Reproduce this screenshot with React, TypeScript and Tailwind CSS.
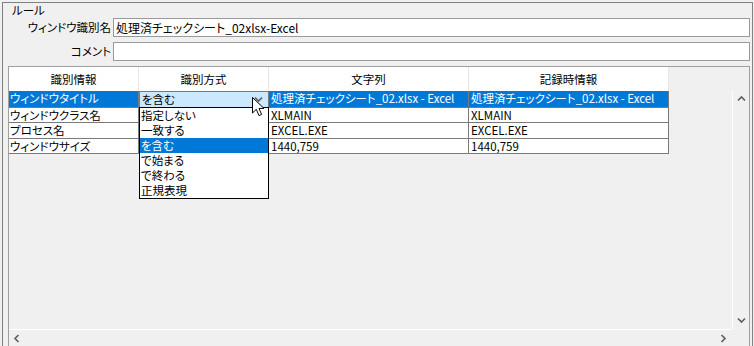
import React from "react";

function Chevron({ dir }: { dir: "up" | "down" | "left" | "right" }) {
  const pts = {
    up: "1,5.5 4.5,2 8,5.5",
    down: "1,2.5 4.5,6 8,2.5",
    left: "5.5,1 2,4.5 5.5,8",
    right: "2.5,1 6,4.5 2.5,8",
  }[dir];
  return (
    <svg width="9" height="9" viewBox="0 0 9 9">
      <polyline points={pts} fill="none" stroke="#606060" strokeWidth="1.7" />
    </svg>
  );
}

const rows = [
  { name: "ウィンドウタイトル", val: "処理済チェックシート_02.xlsx - Excel", h: "h-[17px]" },
  { name: "ウィンドウクラス名", val: "XLMAIN", h: "h-[15px]" },
  { name: "プロセス名", val: "EXCEL.EXE", h: "h-[16px]" },
  { name: "ウィンドウサイズ", val: "1440,759", h: "h-[15px]" },
];

const options = ["指定しない", "一致する", "を含む", "で始まる", "で終わる", "正規表現"];

export default function App() {
  return (
    <div className="w-[754px] h-[346px] overflow-hidden bg-[#f0f0f0] text-[11.5px] text-black font-['Noto_Sans_CJK_JP',sans-serif] [font-feature-settings:'palt'] pt-[2px] pl-[2px]">
      <div className="w-[751px] h-[400px] border-l border-t border-r border-[#808080] flex flex-col">
        <div className="h-[15px] leading-[15px] pl-[9px]">ルール</div>
        <div className="flex h-[19px] mr-[2px]">
          <div className="w-[108px] text-right leading-[19px] whitespace-nowrap">ウィンドウ識別名</div>
          <div className="ml-[2px] flex-1 border border-[#9a9a9a] bg-white pl-[2px] leading-[17px] whitespace-nowrap text-[12px]">
            処理済チェックシート_02xlsx-Excel
          </div>
        </div>
        <div className="flex h-[19px] mr-[2px] mt-[5px]">
          <div className="w-[108px] text-right leading-[19px] whitespace-nowrap">コメント</div>
          <div className="ml-[2px] flex-1 border border-[#9a9a9a] bg-white" />
        </div>
        <div className="ml-[5px] mr-[2px] mt-[5px] h-[300px] border border-[#a0a0a0]">
          <div className="grid grid-cols-[723px_17px] grid-rows-[262px_17px]">
            {/* content */}
            <div className="relative">
              <div className="flex h-[24px]">
                {[
                  ["識別情報", "w-[130px]"],
                  ["識別方式", "w-[130px]"],
                  ["文字列", "w-[200px]"],
                  ["記録時情報", "w-[200px]"],
                ].map(([t, w]) => (
                  <div key={t} className={`${w} bg-white border-r border-[#e5e5e5] text-center leading-[24px]`}>
                    {t}
                  </div>
                ))}
              </div>
              {rows.map((r, i) => {
                const sel = i === 0;
                return (
                  <div key={r.name} className={`flex ${r.h}`}>
                    <div
                      className={`w-[130px] border-r border-b border-[#7a7a7a] pl-[1px] leading-[14px] whitespace-nowrap overflow-hidden ${
                        sel ? "bg-[#0078d7] text-white" : "bg-white"
                      }`}
                    >
                      {r.name}
                    </div>
                    {sel ? (
                      <div className="relative w-[130px] border border-[#7a7a7a] bg-[#cce8ff] pl-[2px] leading-[14px]">
                        を含む
                        <div className="absolute right-[5px] top-[3px]">
                          <Chevron dir="down" />
                        </div>
                      </div>
                    ) : (
                      <div className="w-[130px] border-r border-b border-[#7a7a7a] bg-white" />
                    )}
                    <div
                      className={`w-[200px] border-r border-b border-[#7a7a7a] pl-[2px] leading-[14px] whitespace-nowrap overflow-hidden ${
                        sel ? "bg-[#0078d7] text-white" : "bg-white"
                      }`}
                    >
                      {r.val}
                    </div>
                    <div
                      className={`w-[200px] border-r border-b border-[#7a7a7a] pl-[2px] leading-[14px] whitespace-nowrap overflow-hidden ${
                        sel ? "bg-[#0078d7] text-white" : "bg-white"
                      }`}
                    >
                      {r.val}
                    </div>
                  </div>
                );
              })}
              {/* dropdown popup */}
              <div className="absolute left-[130px] top-[40px] w-[130px] border border-black bg-white flex flex-col">
                {options.map((o, i) => (
                  <div
                    key={o}
                    className={`h-[15px] leading-[15px] pl-[1px] ${i === 2 ? "bg-[#0078d7] text-white" : ""}`}
                  >
                    {o}
                  </div>
                ))}
              </div>
              {/* mouse cursor */}
              <svg className="absolute left-[243px] top-[30px]" width="13" height="20" viewBox="0 0 13 20">
                <path
                  d="M0.5,0.5 L0.5,16 L4.3,12.3 L7,18.6 L9.6,17.5 L7,11.4 L12,11.4 Z"
                  fill="#ffffff"
                  stroke="#000000"
                  strokeWidth="1"
                  strokeLinejoin="miter"
                />
              </svg>
            </div>
            {/* vertical scrollbar */}
            <div className="pt-[24px]">
              <div className="h-[238px] border-l border-white flex flex-col justify-between">
                <div className="h-[17px] flex items-center justify-center">
                  <Chevron dir="up" />
                </div>
                <div className="h-[17px] flex items-center justify-center">
                  <Chevron dir="down" />
                </div>
              </div>
            </div>
            {/* horizontal scrollbar */}
            <div className="border-t border-white flex justify-between">
              <div className="w-[17px] h-[16px] flex items-center justify-center">
                <Chevron dir="left" />
              </div>
              <div className="w-[17px] h-[16px] flex items-center justify-center">
                <Chevron dir="right" />
              </div>
            </div>
            <div />
          </div>
        </div>
      </div>
    </div>
  );
}
